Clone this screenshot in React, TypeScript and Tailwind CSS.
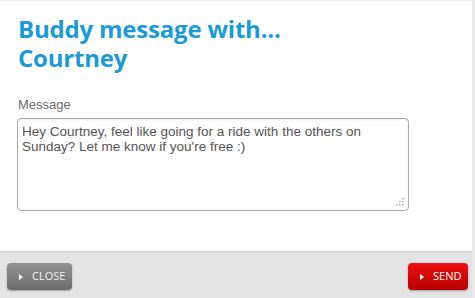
import React from "react";

export default function App() {
  return (
    <div className="w-[475px] h-[298px] bg-white flex flex-col border-r-[3px] border-[#e9e9e9] overflow-hidden" style={{ fontFamily: "Arial, 'Liberation Sans', sans-serif" }}>
      <div className="flex-1 flex flex-col pl-[18px] pt-[13px] border-t border-[#ececec]">
        <h1 className="text-[24px] leading-[29px] font-bold text-[#1b9ad8] tracking-[-0.2px]" style={{ fontFamily: "'Open Sans', sans-serif" }}>
          Buddy message with...
          <br />
          Courtney
        </h1>
        <label className="mt-[25px] text-[13px] leading-[16px] text-[#6b6b6b]" style={{ fontFamily: "'Liberation Sans', Arial, sans-serif" }}>Message</label>
        <div className="mt-[5px] ml-[-1px] w-[392px] h-[93px] rounded-[4px] border border-[#a9a9a9] shadow-[inset_0_1px_2px_rgba(0,0,0,0.08)] relative px-[4px] pt-[5px]">
          <p className="text-[13.5px] leading-[15px] text-[#555]" style={{ fontFamily: "'Liberation Sans', Arial, sans-serif" }}>
            Hey Courtney, feel like going for a ride with the others on Sunday? Let me know if you're free :)
          </p>
          <svg className="absolute right-[3px] bottom-[3px]" width="10" height="10" viewBox="0 0 10 10">
            <rect x="7" y="1" width="1.5" height="1.5" fill="#aaa" />
            <rect x="4" y="4" width="1.5" height="1.5" fill="#aaa" />
            <rect x="7" y="4" width="1.5" height="1.5" fill="#aaa" />
            <rect x="1" y="7" width="1.5" height="1.5" fill="#aaa" />
            <rect x="4" y="7" width="1.5" height="1.5" fill="#aaa" />
            <rect x="7" y="7" width="1.5" height="1.5" fill="#aaa" />
          </svg>
        </div>
      </div>
      <div className="h-[47px] bg-[#e3e3e3] border-t border-[#d2d2d2] flex items-center justify-between pl-[7px] pr-[4px] pt-[3px]">
        <button className="w-[65px] h-[27px] rounded-[4px] bg-gradient-to-b from-[#939393] to-[#6c6c6c] shadow-[0_1px_2px_rgba(0,0,0,0.3)] flex items-center pl-[12px] gap-[9px] text-[11px] text-[#f2f2f2]" style={{ fontFamily: "'Open Sans', sans-serif" }}>
          <span className="w-0 h-0 border-y-[3.5px] border-y-transparent border-l-[4px] border-l-white"></span>
          CLOSE
        </button>
        <button className="w-[60px] h-[27px] rounded-[4px] bg-gradient-to-b from-[#ee1111] to-[#b80000] shadow-[0_1px_2px_rgba(0,0,0,0.3)] flex items-center pl-[12px] gap-[9px] text-[11px] text-white" style={{ fontFamily: "'Open Sans', sans-serif" }}>
          <span className="w-0 h-0 border-y-[3.5px] border-y-transparent border-l-[4px] border-l-white"></span>
          SEND
        </button>
      </div>
    </div>
  );
}
